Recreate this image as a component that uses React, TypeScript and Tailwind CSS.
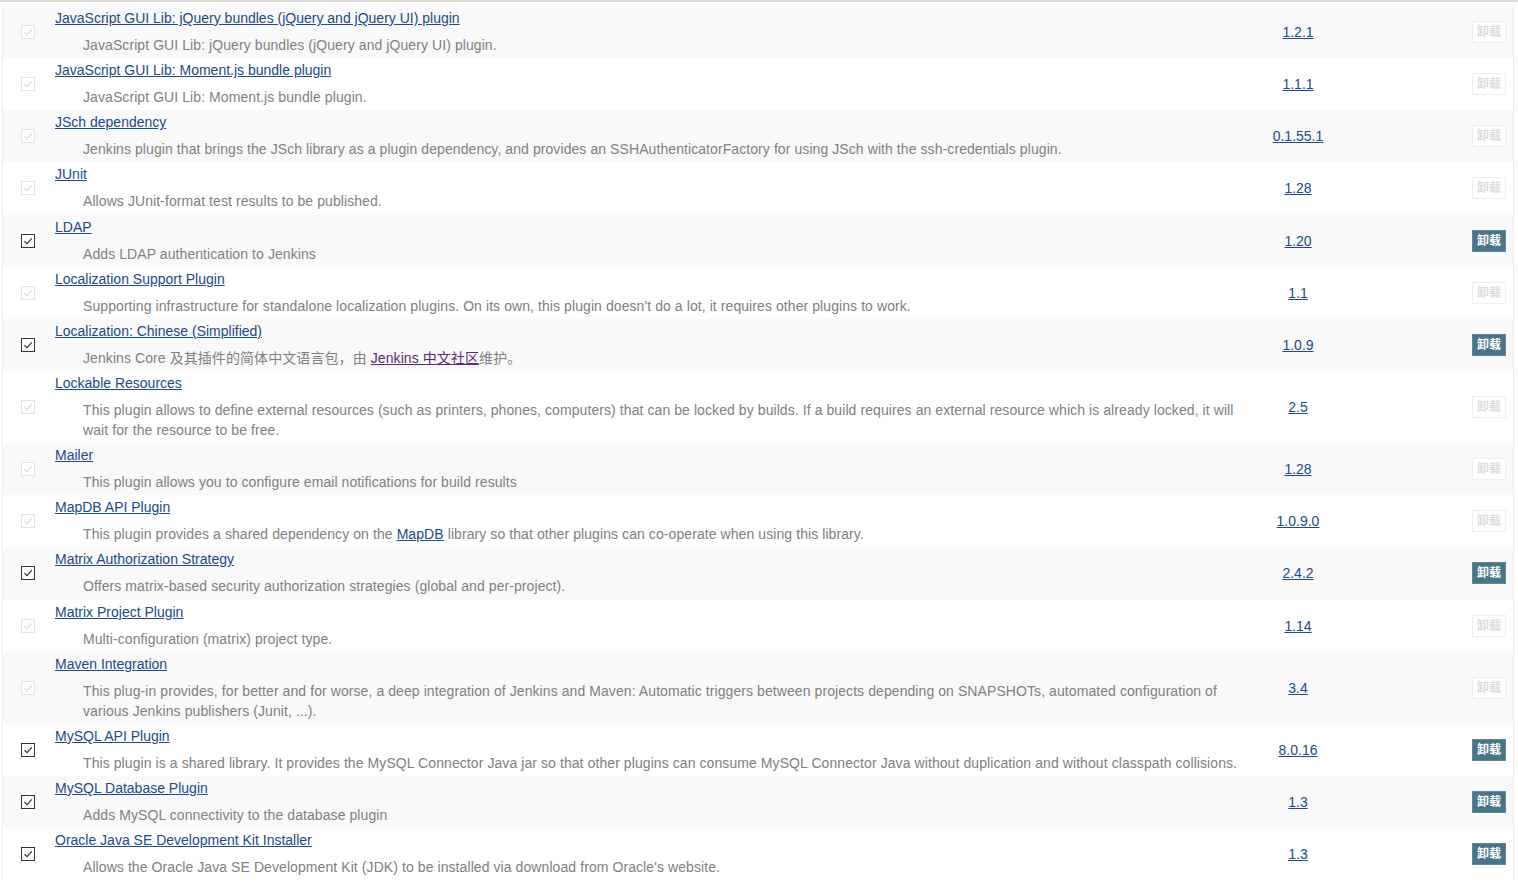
import type { ReactNode } from 'react';

type Plugin = {
  name: string;
  desc: ReactNode;
  version: string;
  enabled: boolean;
};

const plugins: Plugin[] = [
  {
    name: 'JavaScript GUI Lib: jQuery bundles (jQuery and jQuery UI) plugin',
    desc: 'JavaScript GUI Lib: jQuery bundles (jQuery and jQuery UI) plugin.',
    version: '1.2.1',
    enabled: false,
  },
  {
    name: 'JavaScript GUI Lib: Moment.js bundle plugin',
    desc: 'JavaScript GUI Lib: Moment.js bundle plugin.',
    version: '1.1.1',
    enabled: false,
  },
  {
    name: 'JSch dependency',
    desc: 'Jenkins plugin that brings the JSch library as a plugin dependency, and provides an SSHAuthenticatorFactory for using JSch with the ssh-credentials plugin.',
    version: '0.1.55.1',
    enabled: false,
  },
  {
    name: 'JUnit',
    desc: 'Allows JUnit-format test results to be published.',
    version: '1.28',
    enabled: false,
  },
  {
    name: 'LDAP',
    desc: 'Adds LDAP authentication to Jenkins',
    version: '1.20',
    enabled: true,
  },
  {
    name: 'Localization Support Plugin',
    desc: "Supporting infrastructure for standalone localization plugins. On its own, this plugin doesn't do a lot, it requires other plugins to work.",
    version: '1.1',
    enabled: false,
  },
  {
    name: 'Localization: Chinese (Simplified)',
    desc: (
      <>
        Jenkins Core 及其插件的简体中文语言包，由{' '}
        <a href="#" className="text-[#5a2a6e] underline">
          Jenkins 中文社区
        </a>
        维护。
      </>
    ),
    version: '1.0.9',
    enabled: true,
  },
  {
    name: 'Lockable Resources',
    desc: 'This plugin allows to define external resources (such as printers, phones, computers) that can be locked by builds. If a build requires an external resource which is already locked, it will wait for the resource to be free.',
    version: '2.5',
    enabled: false,
  },
  {
    name: 'Mailer',
    desc: 'This plugin allows you to configure email notifications for build results',
    version: '1.28',
    enabled: false,
  },
  {
    name: 'MapDB API Plugin',
    desc: (
      <>
        This plugin provides a shared dependency on the{' '}
        <a href="#" className="text-[#204a87] underline">
          MapDB
        </a>{' '}
        library so that other plugins can co-operate when using this library.
      </>
    ),
    version: '1.0.9.0',
    enabled: false,
  },
  {
    name: 'Matrix Authorization Strategy',
    desc: 'Offers matrix-based security authorization strategies (global and per-project).',
    version: '2.4.2',
    enabled: true,
  },
  {
    name: 'Matrix Project Plugin',
    desc: 'Multi-configuration (matrix) project type.',
    version: '1.14',
    enabled: false,
  },
  {
    name: 'Maven Integration',
    desc: 'This plug-in provides, for better and for worse, a deep integration of Jenkins and Maven: Automatic triggers between projects depending on SNAPSHOTs, automated configuration of various Jenkins publishers (Junit, ...).',
    version: '3.4',
    enabled: false,
  },
  {
    name: 'MySQL API Plugin',
    desc: 'This plugin is a shared library. It provides the MySQL Connector Java jar so that other plugins can consume MySQL Connector Java without duplication and without classpath collisions.',
    version: '8.0.16',
    enabled: true,
  },
  {
    name: 'MySQL Database Plugin',
    desc: 'Adds MySQL connectivity to the database plugin',
    version: '1.3',
    enabled: true,
  },
  {
    name: 'Oracle Java SE Development Kit Installer',
    desc: "Allows the Oracle Java SE Development Kit (JDK) to be installed via download from Oracle's website.",
    version: '1.3',
    enabled: true,
  },
];

function CheckBox({ enabled }: { enabled: boolean }) {
  return (
    <span
      className={
        enabled
          ? 'flex h-[14px] w-[14px] items-center justify-center border border-[#333] bg-white'
          : 'flex h-[14px] w-[14px] items-center justify-center border border-[#e3e3e3] bg-white'
      }
    >
      <svg width="12" height="12" viewBox="0 0 12 12">
        <path
          d="M2.5 6.2 L5 8.6 L9.8 3.4"
          fill="none"
          stroke={enabled ? '#333' : '#dcdcdc'}
          strokeWidth="1.2"
        />
      </svg>
    </span>
  );
}

export default function App() {
  return (
    <div
      className="min-h-screen bg-white text-[14px] leading-5"
      style={{ fontFamily: '"Liberation Sans", Arial, "Noto Sans CJK SC", sans-serif' }}
    >
      <div className="border-t-2 border-[#dcdcd8] pt-1">
        <div className="ml-[2px] mr-[4px] border-x border-[#ececec]">
          {plugins.map((p, i) => (
            <div
              key={p.name}
              className={`flex items-center ${i % 2 === 0 ? 'bg-[#f9f9f9]' : 'bg-white'}`}
            >
              <div className="flex w-[52px] shrink-0 items-center pl-[18px]">
                <CheckBox enabled={p.enabled} />
              </div>
              <div className="w-[1191px] shrink-0 pt-[2px] pb-[3.15px]">
                <div className="h-5 leading-5">
                  <a href="#" className="text-[#204a87] underline">
                    {p.name}
                  </a>
                </div>
                <div className="mt-[7px] pl-7 pr-1 leading-5 tracking-[0.08px] text-[#808080]">
                  {p.desc}
                </div>
              </div>
              <div className="w-[104px] shrink-0 text-center">
                <a href="#" className="text-[#204a87] underline">
                  {p.version}
                </a>
              </div>
              <div className="flex flex-1 justify-end pr-[7px]">
                <button
                  className={
                    p.enabled
                      ? 'h-[22px] w-[34px] border border-[#5d889b] bg-[#4a7589] text-[12px] font-bold leading-none text-white'
                      : 'h-[22px] w-[34px] border border-[#eeeeee] bg-white text-[12px] font-bold leading-none text-[#dddddd]'
                  }
                >
                  卸载
                </button>
              </div>
            </div>
          ))}
        </div>
      </div>
    </div>
  );
}
